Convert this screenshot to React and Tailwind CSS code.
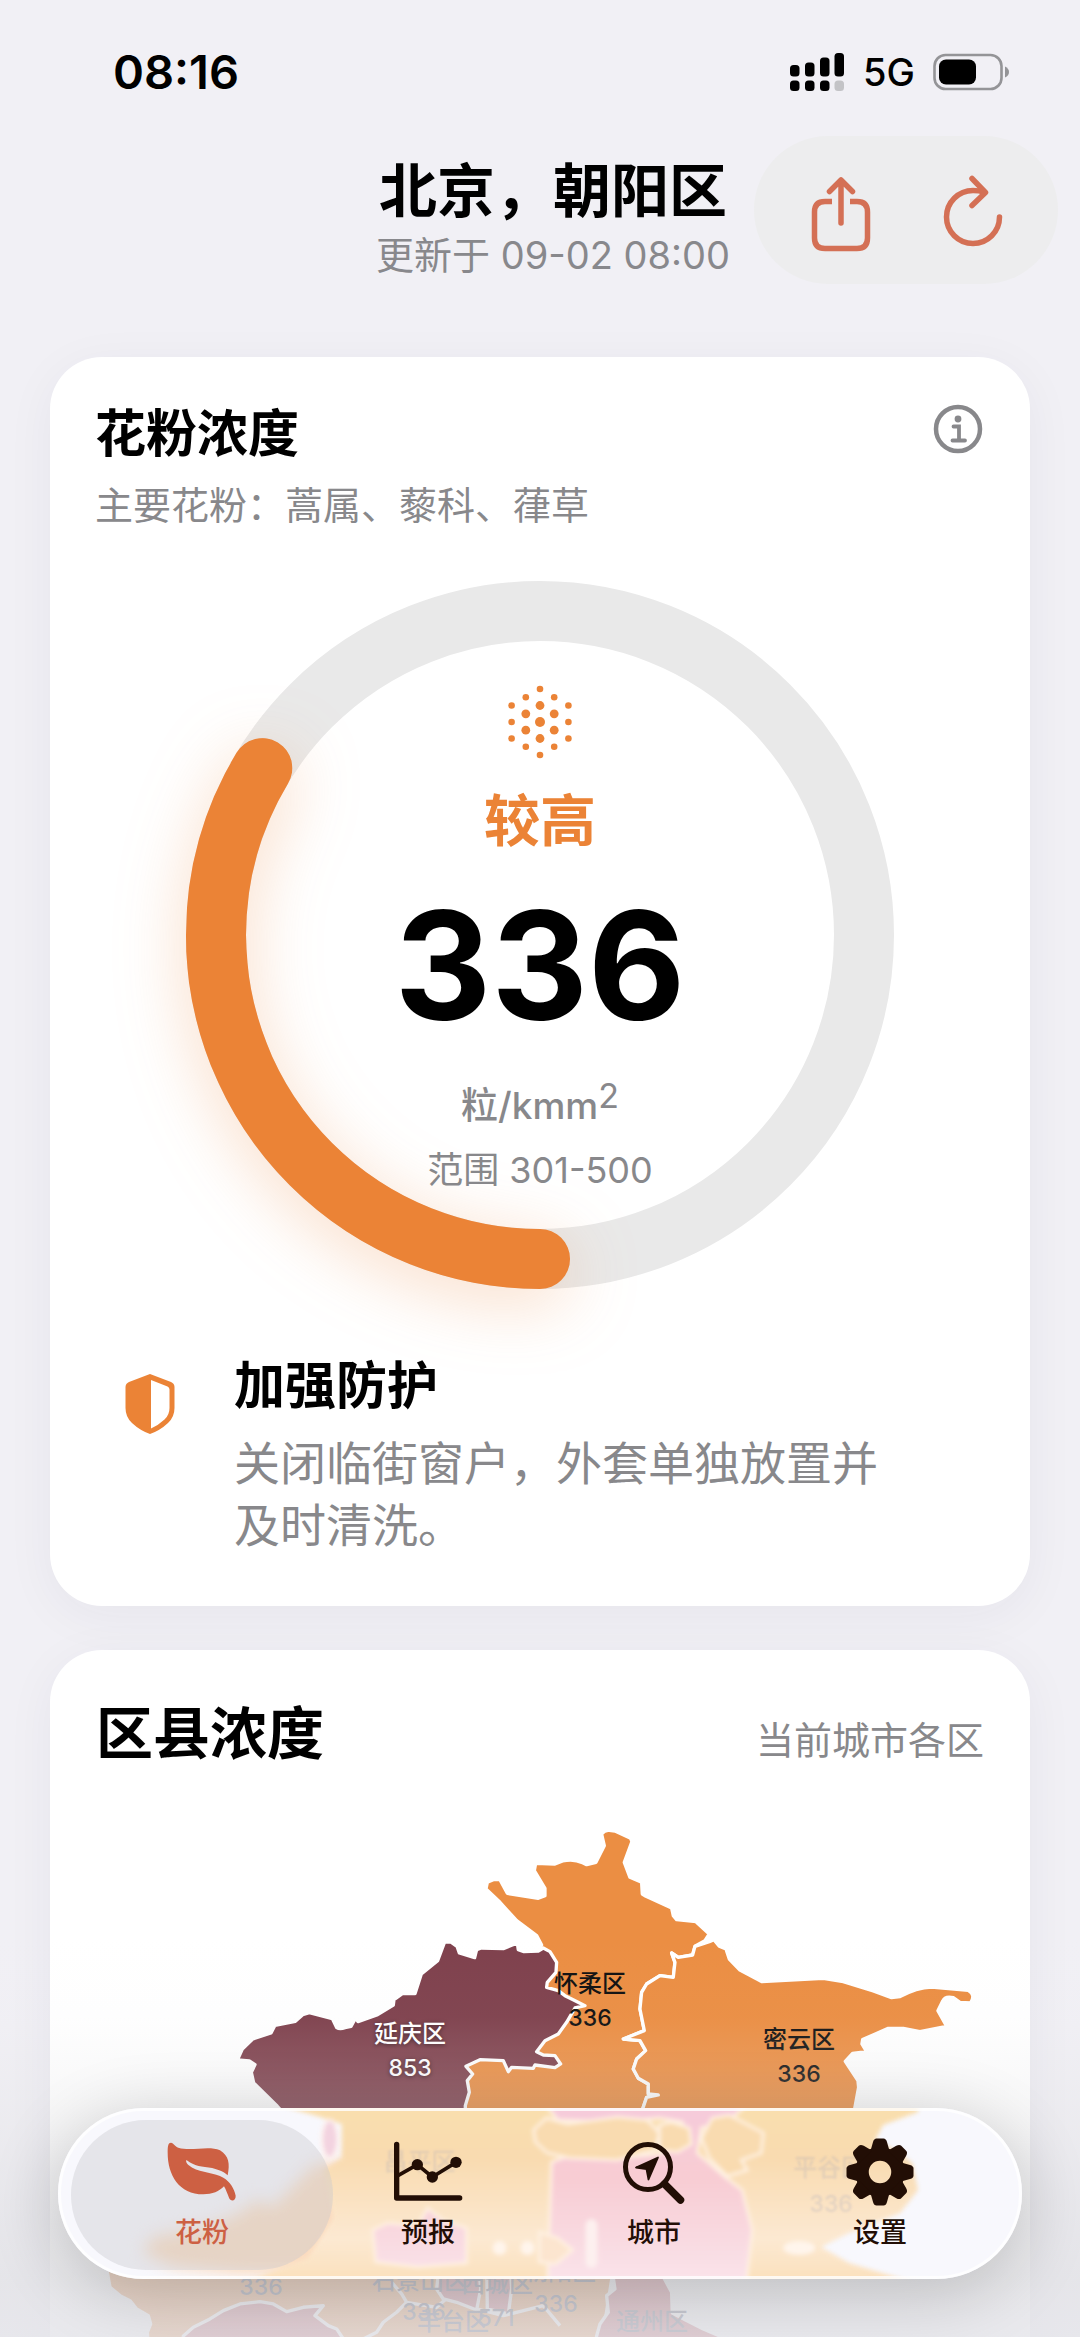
const GEAR_TEETH = [0, 45, 90, 135, 180, 225, 270, 315];

// Puntos del icono de polen: [x, y, radio]
const POLLEN_DOTS = [
  [0, 0, 5],
  [0, -16.5, 4.4], [0, 16.5, 4.4],
  [-14.2, -8.2, 4.4], [14.2, -8.2, 4.4], [-14.2, 8.2, 4.4], [14.2, 8.2, 4.4],
  [0, -33, 3.3], [0, 33, 3.3],
  [-14.2, -24.8, 3.3], [14.2, -24.8, 3.3], [-14.2, 24.8, 3.3], [14.2, 24.8, 3.3],
  [-28.4, -16.5, 3.3], [28.4, -16.5, 3.3], [-28.4, 0, 3.3], [28.4, 0, 3.3],
  [-28.4, 16.5, 3.3], [28.4, 16.5, 3.3],
];

function StatusBar() {
  return (
    <div className="flex h-[136px] items-start justify-between pl-[113px] pr-[70px] pt-[44px]">
      <span className="text-[47px] font-semibold leading-[56px]">08:16</span>
      <div className="flex items-center gap-[18px]">
        <svg className="h-[40px] w-[55px]" viewBox="0 0 55 40">
          <rect x="0" y="13" width="9.5" height="11.5" rx="3.5" />
          <rect x="15" y="10.5" width="9.5" height="14" rx="3.5" />
          <rect x="30" y="5.5" width="9.5" height="19" rx="3.5" />
          <rect x="44.5" y="1" width="9.5" height="23.5" rx="3.5" />
          <rect x="0" y="28.5" width="9.5" height="10.5" rx="3.5" />
          <rect x="15" y="28.5" width="9.5" height="10.5" rx="3.5" />
          <rect x="30" y="28.5" width="9.5" height="10.5" rx="3.5" />
          <rect x="44.5" y="28.5" width="9.5" height="10.5" rx="3.5" fill="#c3c3c6" />
        </svg>
        <span className="text-[38px] font-medium leading-[56px]">5G</span>
        <svg className="h-[38px] w-[77px]" viewBox="0 0 77 38">
          <rect x="1.5" y="2" width="67" height="34" rx="11" fill="none" stroke="#949497" strokeWidth="2.6" />
          <rect x="6" y="6.5" width="37" height="25" rx="7" />
          <path d="M72 13.5 Q76 15.500 76 19 T72 24.500Z" fill="#949497" />
        </svg>
      </div>
    </div>
  );
}

function Header() {
  return (
    <header className="grid grid-cols-[1fr_auto_1fr] items-start pl-[48px] pr-[22px]">
      <div />
      <div className="flex flex-col items-center pt-[17px]">
        <h1 className="text-[58px] font-semibold leading-[76px]">北京，朝阳区</h1>
        <p className="text-[38px] leading-[52px] text-[#88888c]">更新于 09-02 08:00</p>
      </div>
      <div className="flex h-[148px] w-[304px] items-center justify-between justify-self-end rounded-full bg-[#ededee] pl-[52px] pr-[50px] pt-[7px]">
        <button type="button" aria-label="分享">
          <svg className="h-[78px] w-[70px]" viewBox="0 0 70 78" fill="none" stroke="#d47055" strokeWidth="5.5" strokeLinecap="round" strokeLinejoin="round">
            <path d="M26 26.500H19 Q8.500 26.500 8.500 37 V63 Q8.500 73.500 19 73.500 H51 Q61.500 73.500 61.500 63 V37 Q61.500 26.500 51 26.500 H44" strokeLinecap="butt" />
            <path d="M35 48 V6 M23.500 16.500 L35 5 L46.500 16.500" />
          </svg>
        </button>
        <button type="button" aria-label="刷新">
          <svg className="h-[78px] w-[70px]" viewBox="0 0 70 78" fill="none" stroke="#d47055" strokeWidth="5.500" strokeLinecap="round" strokeLinejoin="round">
            <path d="M61.500 42 A26.500 26.500 0 1 1 35 15.500 Q41 15.500 46 17" />
            <path d="M34 3.500 L47.500 17.500 L34 30.500" />
          </svg>
        </button>
      </div>
    </header>
  );
}

function Gauge() {
  // 336 de 1000, empezando desde abajo
  const circumference = 2 * Math.PI * 324;
  return (
    <div className="relative mx-auto w-[708px] max-w-full">
      <svg className="block w-full overflow-visible" viewBox="0 0 708 708" fill="none">
        <circle cx="354" cy="354" r="324" stroke="#e9e9e9" strokeWidth="60" />
        <circle
          cx="354"
          cy="354"
          r="324"
          stroke="#eb8336"
          strokeWidth="60"
          strokeLinecap="round"
          strokeDasharray={`${circumference * 0.336} ${circumference}`}
          transform="rotate(90 354 354)"
          className="drop-shadow-[14px_0_34px_rgba(235,131,54,0.28)]"
        />
      </svg>
      <div className="absolute inset-0 flex flex-col items-center pt-[100px]">
        <svg className="h-[82px] w-[82px]" viewBox="-41 -41 82 82" fill="#eb8336">
          {POLLEN_DOTS.map(([x, y, r]) => (
            <circle key={`${x}-${y}`} cx={x} cy={y} r={r} />
          ))}
        </svg>
        <span className="mt-[20px] text-[56px] font-semibold leading-[76px] text-[#eb8336]">较高</span>
        <span className="mt-[17px] text-[150px] font-bold leading-[180px]">336</span>
        <span className="mt-[22px] flex items-start text-[37px] font-medium leading-[56px] text-[#88888b]">
          粒/kmm
          <span className="text-[34px] font-normal leading-[36px]">2</span>
        </span>
        <span className="mt-[10px] text-[36px] leading-[52px] text-[#88888b]">范围 301-500</span>
      </div>
    </div>
  );
}

function PollenCard() {
  return (
    <section className="rounded-[52px] bg-white px-[45px] pb-[50px] pt-[41px] shadow-[0_10px_50px_rgba(40,40,80,0.05)]">
      <div className="flex items-start justify-between">
        <div>
          <h2 className="text-[51px] font-semibold leading-[72px]">花粉浓度</h2>
          <p className="mt-[7px] text-[38px] leading-[56px] text-[#88888b]">主要花粉：蒿属、藜科、葎草</p>
        </div>
        <button type="button" aria-label="说明" className="mt-[4px]">
          <svg className="h-[54px] w-[54px]" viewBox="0 0 54 54" fill="none" stroke="#88888b" strokeWidth="4.5">
            <circle cx="27" cy="27" r="22" />
            <circle cx="27" cy="17" r="3.400" fill="#88888b" stroke="none" />
            <path d="M22.500 24.500 H28 V38 M21.500 38.500 H34" strokeWidth="3.800" strokeLinecap="round" />
          </svg>
        </button>
      </div>
      <div className="mt-[48px]">
        <Gauge />
      </div>
      <div className="mt-[61px] flex items-start pl-[28px]">
        <svg className="mt-[22px] h-[64px] w-[54px] shrink-0" viewBox="0 0 54 64">
          <path d="M27 2 L48 10 Q51.500 11.500 51.500 15 V36 Q51.500 45 45 51 Q37 58.500 27 62 Q17 58.500 9 51 Q2.500 45 2.500 36 V15 Q2.500 11.500 6 10Z" fill="#eb8336" />
          <path d="M28 8 L44.500 14.500 Q46.500 15.300 46.500 17.500 V36 Q46.500 43 41.500 47.500 Q35 53.500 28 56.500Z" fill="#fff" />
        </svg>
        <div className="ml-[57px] flex-1">
          <h3 className="text-[51px] font-semibold leading-[72px]">加强防护</h3>
          <p className="mt-[10px] max-w-[680px] text-[46px] leading-[62px] text-[#88888b]">
            关闭临街窗户，外套单独放置并及时清洗。
          </p>
        </div>
      </div>
    </section>
  );
}

function DistrictMap() {
  return (
    <svg className="block w-full" viewBox="0 0 980 640" role="img" aria-label="北京各区花粉浓度">
      <g transform="translate(160 0) scale(0.3333)" stroke="#fff" strokeWidth="10" strokeLinejoin="round">
        <path
          fill="#eb8e43"
          d="M828 240 L832 220 L850 212 L870 212 L892 253 L985 268 L1005 260 L1005 238 L973 185 L977 163 L1035 165 L1058 156 Q1090 148 1118 161 L1130 167 L1158 160 L1183 110 L1175 75 Q1185 62 1198 64 L1215 66 L1262 88 L1266 98 L1243 160 L1260 205 L1295 220 L1297 255 L1308 262 L1385 297 L1390 320 L1400 332 L1458 338 L1498 375 L1485 395 L1455 412 L1448 438 L1405 445 L1385 432 L1395 460 L1390 505 L1350 500 L1310 525 L1295 550 L1290 600 L1303 665 L1240 690 L1290 695 L1307 725 L1280 750 L1270 780 L1285 808 L1315 825 L1315 855 L1345 858 L1310 865 L1298 900 L1290 1100 H700 V800 L900 600 L995 408 L980 380 L920 335 L870 280Z"
        />
        <path
          fill="#eb8e43"
          d="M1498 398 L1512 392 L1528 412 L1548 420 L1558 450 L1590 483 L1655 518 L1840 508 L1900 518 L1990 546 L2045 566 L2070 563 Q2120 535 2165 534 L2275 544 Q2298 558 2282 582 L2250 580 L2230 566 Q2205 560 2198 577 L2184 605 L2210 652 L2130 668 L2080 658 L2035 658 L1958 692 L1956 705 L1970 728 L1928 733 L1906 757 L1944 815 L1946 835 L1934 900 L1928 1100 H1290 L1298 900 L1310 865 L1345 858 L1315 855 L1315 825 L1285 808 L1270 780 L1280 750 L1307 725 L1290 695 L1240 690 L1303 665 L1290 600 L1295 550 L1310 525 L1350 500 L1390 505 L1395 460 L1385 432 L1405 445 L1448 438 L1455 412Z"
        />
        <path
          fill="#7f414d"
          d="M82 753 L97 720 L128 690 L183 672 L195 649 L256 637 L278 617 L298 611 L367 629 L380 656 Q390 662 405 656 L423 652 L437 627 L444 638 L503 617 L550 588 L552 572 L577 554 L615 554 L634 495 L683 455 L704 399 L722 399 L741 412 L748 432 L794 446 L800 422 L814 417 L880 419 L922 402 L925 422 L942 428 L985 426 L1000 417 L1020 428 L1040 460 L1038 490 L1012 520 L1010 535 L1045 545 L1065 560 L1085 570 L1125 590 L1095 597 L1070 640 L1045 675 L1005 695 L980 728 L1000 738 L1035 740 L1052 765 L1035 776 L975 768 L970 778 L905 775 L895 788 L880 755 L810 752 L768 772 L788 795 L772 815 L778 850 L766 890 V1000 L300 1000 L202 892 L131 822 L124 790 L135 767 L118 756Z"
        />
        <path
          fill="#eb8e43"
          d="M-315 1350 L-305 1407 L-300 1435 L-270 1460 L-240 1475 L-220 1500 L-185 1520 L-178 1545 L-188 1570 L-170 1800 H1170 L1180 1570 L1215 1350Z"
        />
        <path
          fill="#c15861"
          d="M-95 1800 L-80 1581 L-50 1555 L0 1530 L40 1505 L90 1485 L150 1478 L190 1485 L230 1508 L280 1495 L340 1490 L315 1520 L355 1550 L380 1560 L400 1590 L470 1800Z"
        />
        <path fill="none" d="M545 1420 L575 1455 L590 1480 L560 1510 L520 1540 L500 1570 L460 1590 M590 1480 L680 1495 L720 1460 L800 1500 L880 1520 L1000 1490 L1050 1550" />
        <path fill="#c15861" d="M690 1350 L680 1440 L700 1470 L740 1480 L800 1503 L812 1440 L805 1350Z M830 1350 L832 1500 L895 1515 L905 1440 L900 1350Z" />
        <path
          fill="#c15861"
          d="M1215 1350 L1210 1407 L1215 1440 L1190 1460 L1195 1510 L1170 1545 L1160 1581 L1150 1800 H1700 L1550 1590 L1480 1560 L1430 1535 L1387 1512 L1385 1450 L1362 1407 L1355 1350Z"
        />
      </g>
      <g textAnchor="middle" className="text-[24px] font-medium">
        <g fill="#fff" className="[text-shadow:0_1px_4px_rgba(0,0,0,0.6)]">
          <text x="360" y="233">延庆区</text>
          <text x="360" y="267" className="text-[23px]">853</text>
        </g>
        <g fill="#111">
          <text x="540" y="183">怀柔区</text>
          <text x="540" y="217" className="text-[23px]">336</text>
          <text x="749" y="239">密云区</text>
          <text x="749" y="273" className="text-[23px]">336</text>
        </g>
        <g fill="#4b5068">
          <text x="211" y="486" className="text-[23px]">336</text>
          <text x="370" y="480">石景山区</text>
          <text x="447" y="483">西城区</text>
          <text x="374" y="511" className="text-[23px]">336</text>
          <text x="446" y="517" className="text-[23px]">571</text>
          <text x="403" y="521">丰台区</text>
          <text x="506" y="503" className="text-[23px]">336</text>
          <text x="510" y="471">朝阳区</text>
          <text x="602" y="521">通州区</text>
        </g>
      </g>
    </svg>
  );
}

function DistrictCard() {
  return (
    <section className="mt-[44px] rounded-[52px] bg-white pt-[44px] shadow-[0_10px_50px_rgba(40,40,80,0.05)]">
      <div className="flex items-center justify-between px-[46px]">
        <h2 className="text-[57px] font-bold leading-[80px]">区县浓度</h2>
        <p className="pt-[12px] text-[38px] leading-[56px] text-[#88888b]">当前城市各区</p>
      </div>
      <div className="mt-[35px]">
        <DistrictMap />
      </div>
    </section>
  );
}

// Fondo de cristal: el mapa desenfocado detrás de la barra
function GlassMap() {
  return (
    <svg className="absolute inset-0 h-full w-full rounded-full" viewBox="0 0 965 171" preserveAspectRatio="none" aria-hidden="true">
      <defs>
        <linearGradient id="glassOrange" x1="0" y1="0" x2="0" y2="1">
          <stop offset="0" stopColor="#f9dfae" />
          <stop offset="0.3" stopColor="#f9dbb0" />
          <stop offset="0.75" stopColor="#fce9d2" />
          <stop offset="1" stopColor="#fbe0bb" />
        </linearGradient>
        <linearGradient id="glassPink" x1="0" y1="0" x2="0" y2="171" gradientUnits="userSpaceOnUse">
          <stop offset="0" stopColor="#f6cbdb" />
          <stop offset="0.4" stopColor="#f8ccd3" />
          <stop offset="1" stopColor="#fae3ea" />
        </linearGradient>
        <filter id="glassSoft" x="-20%" y="-20%" width="140%" height="140%" colorInterpolationFilters="sRGB">
          <feGaussianBlur stdDeviation="2" />
        </filter>
        <filter id="glassBlur" x="-20%" y="-20%" width="140%" height="140%" colorInterpolationFilters="sRGB">
          <feGaussianBlur stdDeviation="8" />
        </filter>
      </defs>
      <path filter="url(#glassBlur)" fill="#fbdcc0" d="M290 50 L255 58 L229 85 L215 99 L199 92 L182 105 L149 119 L95 129 L85 145 L115 159 L182 166 H290Z" />
      <g filter="url(#glassSoft)">
        <path fill="url(#glassOrange)" d="M215 -5 L262 9 L284 16 L284 50 L266 62 L276 110 L250 150 L182 176 H861 L792 155 L764 139 L792 125 L843 105 L861 82 L855 55 L838 42 L818 32 L826 17 L861 4 V-5Z" />
        <ellipse cx="272" cy="31" rx="8" ry="19" fill="#f3d3e0" stroke="#fdf1ee" strokeWidth="3" />
        <g fill="url(#glassPink)" stroke="#fff1e2" strokeWidth="3">
          <path d="M315 122 L330 115 L360 118 L370 100 L385 112 L409 120 V155 L360 159 L318 154Z" />
          <path d="M488 -4 H690 L670 14 L644 20 L640 45 L668 69 L685 82 L695 122 L689 176 H490 L494 54 L510 48 L560 50 L602 46 L630 38 L625 14 L602 10 L560 14 L500 12Z" />
        </g>
        <g fill="#f9dbb0" stroke="#fff1e2" strokeWidth="3">
          <path d="M476 22 L489 10 L510 16 L560 9 L590 12 L602 25 L598 42 L560 52 L512 50 L490 45 L478 34Z" />
          <path d="M602 17 L614 14 L632 20 L634 36 L620 44 L602 42Z" />
          <path d="M644 30 L655 10 L672 7 L706 25 L704 45 L684 52 L690 62 L670 68 L652 50Z" />
          <path d="M482 124 L500 130 L515 142 L498 156 L482 154Z" fill="#fce5cf" />
        </g>
        <path d="M534 117 V154" stroke="#fdf0ef" strokeWidth="12" strokeLinecap="round" />
        <g fill="#fff5ec">
          <circle cx="442" cy="140" r="7" />
          <circle cx="470" cy="140" r="7" />
          <ellipse cx="742" cy="140" rx="16" ry="7" />
        </g>
      </g>
      <g fill="#8b93b8" opacity="0.2" textAnchor="middle" className="text-[24px] font-medium blur-[1px]">
        <text x="362" y="62">昌平区</text>
        <text x="772" y="68">平谷区</text>
        <text x="774" y="104" className="text-[23px]">336</text>
      </g>
    </svg>
  );
}

function LeafIcon() {
  return (
    <svg className="h-[64px] w-[74px]" viewBox="370 157 222 192" fill="currentColor">
      <path d="M388 165 C378 165 378 180 378 195 C378 262 412 320 485 320 C512 320 533 311 547 296 C553 306 557 318 562 330 C567 343 583 340 582 324 C578 302 565 282 545 270 C520 254 480 256 452 240 C440 233 431 225 434 217 C446 226 462 235 490 238 C520 241 545 250 558 263 C565 228 562 205 535 188 C500 172 450 192 410 180 C400 176 396 166 388 165Z" />
    </svg>
  );
}

function ChartIcon() {
  return (
    <svg className="h-[64px] w-[74px]" viewBox="1048 157 222 192" fill="none" stroke="currentColor" strokeLinecap="round" strokeLinejoin="round">
      <path d="M1065 170 V331 H1254" strokeWidth="16" />
      <path d="M1070 263 L1127 231 L1172 268 L1243 224" strokeWidth="11" />
      <g fill="currentColor" stroke="none">
        <circle cx="1127" cy="231" r="17" />
        <circle cx="1172" cy="268" r="17" />
        <circle cx="1243" cy="224" r="17" />
      </g>
    </svg>
  );
}

function CityIcon() {
  return (
    <svg className="h-[64px] w-[74px]" viewBox="617 2141 74 64" fill="none" stroke="currentColor" strokeLinecap="round">
      <circle cx="648" cy="2168" r="22.500" strokeWidth="5" />
      <path d="M664.500 2185 L680.500 2201" strokeWidth="7.500" />
      <path d="M636 2168.500 L658 2158.500 L648.500 2180.500 L646.500 2170Z" fill="currentColor" strokeWidth="1.800" strokeLinejoin="round" />
    </svg>
  );
}

function GearIcon() {
  return (
    <svg className="h-[68px] w-[74px]" viewBox="-37 -34 74 68">
      <circle r="18" fill="none" stroke="currentColor" strokeWidth="13.500" />
      {GEAR_TEETH.map((angle) => (
        <path key={angle} transform={`rotate(${angle})`} fill="currentColor" d="M-9.500 -21 L-7 -30 Q-6 -33.500 -3.500 -33.500 H3.500 Q6 -33.500 7 -30 L9.500 -21Z" />
      ))}
    </svg>
  );
}

const TABS = [
  { label: "花粉", Icon: LeafIcon, active: true },
  { label: "预报", Icon: ChartIcon },
  { label: "城市", Icon: CityIcon },
  { label: "设置", Icon: GearIcon },
];

function TabBar() {
  return (
    <nav className="absolute inset-x-[58px] bottom-[58px] h-[171px] overflow-visible rounded-full bg-[#f8f8fd] shadow-[0_12px_70px_rgba(0,0,0,0.2)]">
      <GlassMap />
      <div className="pointer-events-none absolute inset-0 rounded-full border-[3px] border-white/80" />
      <div className="relative grid h-full grid-cols-4 pl-[31px] pr-[29px] pb-[9px] pt-[12px]">
        {TABS.map(({ label, Icon, active }) => (
          <button
            key={label}
            type="button"
            className={`relative flex flex-col items-center justify-center gap-[10px] ${active ? "text-[#cd6043]" : "text-[#220e05]"}`}
          >
            {active && <span className="absolute inset-y-0 -inset-x-[18px] rounded-full bg-[#c8c8cc]/40" />}
            <span className="relative flex h-[66px] items-center">
              <Icon />
            </span>
            <span className="relative text-[27px] font-medium leading-[36px]">{label}</span>
          </button>
        ))}
      </div>
    </nav>
  );
}

export default function App() {
  return (
    <div className="relative h-screen overflow-hidden bg-[#f1f0f5] font-['Inter','Noto_Sans_CJK_SC',sans-serif] text-black">
      <StatusBar />
      <Header />
      <main className="px-[50px] pt-[73px]">
        <PollenCard />
        <DistrictCard />
      </main>
      {/* Degradado que oculta el contenido bajo la barra */}
      <div className="pointer-events-none absolute inset-x-0 bottom-0 h-[400px] bg-[linear-gradient(to_bottom,rgba(222,222,224,0)_0%,rgba(222,222,224,0.03)_20%,rgba(222,222,224,0.24)_43%,rgba(226,226,230,0.78)_85%,rgba(229,229,234,0.84)_100%)]" />
      <TabBar />
    </div>
  );
}
